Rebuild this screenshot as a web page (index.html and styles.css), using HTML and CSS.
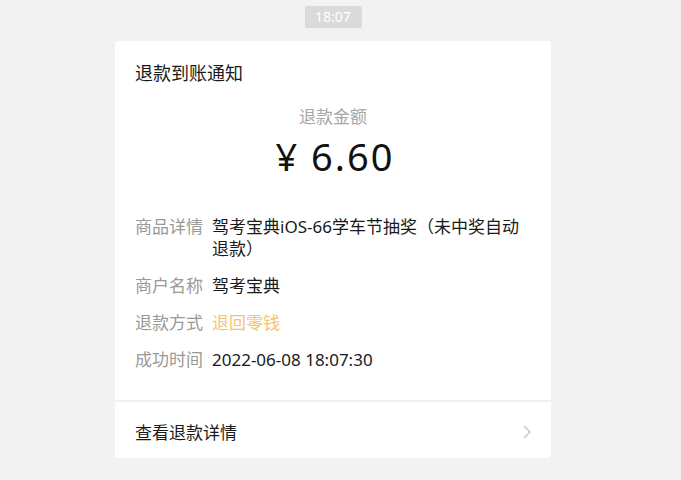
FILE: index.html
```html
<!DOCTYPE html>
<html>
<head>
	<title>退款到账通知</title>
	<meta charset="UTF-8">
	<link rel="stylesheet" href="styles.css">
</head>
<body>

<div id="chat">

	<div class="time">18:07</div>

	<div class="card">

		<div class="card-body">
			<div class="card-title">退款到账通知</div>

			<div class="amount-label">退款金额</div>
			<div class="amount">¥ 6.60</div>

			<div class="rows">
				<div class="row">
					<div class="label">商品详情</div>
					<div class="value">驾考宝典iOS-66学车节抽奖（未中奖自动退款）</div>
				</div>
				<div class="row">
					<div class="label">商户名称</div>
					<div class="value">驾考宝典</div>
				</div>
				<div class="row">
					<div class="label">退款方式</div>
					<div class="value orange">退回零钱</div>
				</div>
				<div class="row">
					<div class="label">成功时间</div>
					<div class="value">2022-06-08 18:07:30</div>
				</div>
			</div>
		</div>

		<div class="card-foot">
			<span>查看退款详情</span>
			<svg class="arrow" width="8" height="14" viewBox="0 0 8 14">
				<path d="M1 1 L7 7 L1 13" fill="none" stroke="#c4c4c4" stroke-width="1.4"/>
			</svg>
		</div>

	</div>

</div>

</body>
</html>
```

FILE: styles.css
```css
* {
	box-sizing: border-box;
}
body {
	margin: 0;
	padding: 0;
	background: #f2f2f2;
	font-family: "Noto Sans", "Noto Sans CJK SC", sans-serif;
	color: #1a1a1a;
}

#chat {
	display: flex;
	flex-direction: column;
	align-items: center;
	padding-top: 6px;
	padding-right: 15px;
}

.time {
	width: 57px;
	height: 22px;
	line-height: 22px;
	text-align: center;
	font-size: 14px;
	color: #fff;
	background: #dadada;
	border-radius: 2px;
}

.card {
	width: 436px;
	margin-top: 13px;
	background: #fff;
	border-radius: 3px;
}

.card-body {
	padding: 20px 20px 29px 20px;
	border-bottom: 2px solid #f0f0f0;
}

.card-title {
	font-size: 18px;
	line-height: 24px;
}

.amount-label {
	margin-top: 20px;
	text-align: center;
	font-size: 17px;
	line-height: 24px;
	color: #a6a6a6;
}

.amount {
	margin-top: 3px;
	margin-bottom: -2px;
	padding-left: 4px;
	text-align: center;
	font-size: 38px;
	line-height: 48px;
	letter-spacing: 2px;
	color: #111;
}

.rows {
	margin-top: 38px;
	display: flex;
	flex-direction: column;
	gap: 15px;
}

.row {
	display: flex;
	font-size: 17px;
	line-height: 22px;
}

.label {
	width: 77px;
	flex-shrink: 0;
	color: #999;
}

.value {
	flex: 1;
	color: #1a1a1a;
}

.value.orange {
	color: #f8c36f;
}

.card-foot {
	display: flex;
	align-items: center;
	justify-content: space-between;
	height: 56px;
	padding: 3px 20px 0 20px;
	font-size: 17px;
}

.arrow {
	display: block;
}
```
